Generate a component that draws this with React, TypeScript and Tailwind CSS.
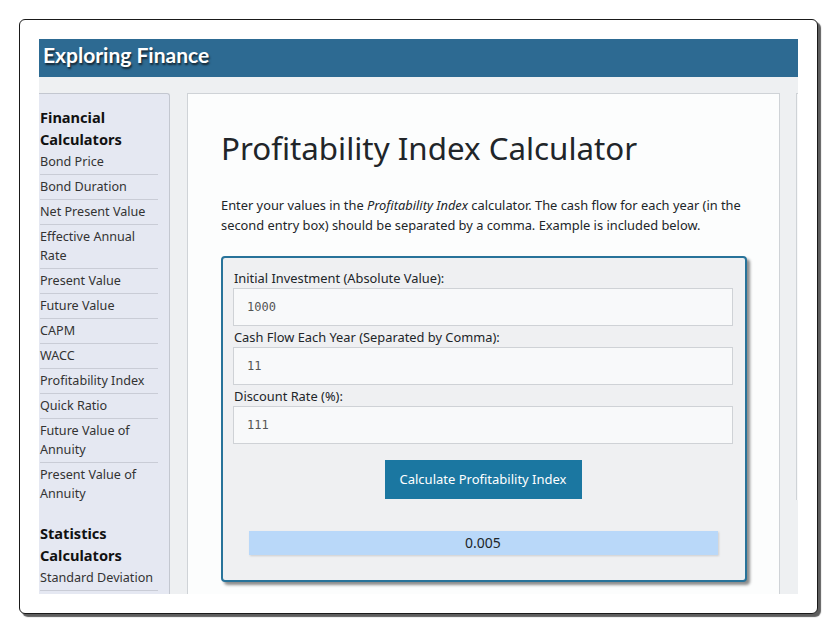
import React from "react";

const financial: string[][] = [
  ["Bond Price"],
  ["Bond Duration"],
  ["Net Present Value"],
  ["Effective Annual", "Rate"],
  ["Present Value"],
  ["Future Value"],
  ["CAPM"],
  ["WACC"],
  ["Profitability Index"],
  ["Quick Ratio"],
  ["Future Value of", "Annuity"],
  ["Present Value of", "Annuity"],
];

const fields = [
  { label: "Initial Investment (Absolute Value):", value: "1000" },
  { label: "Cash Flow Each Year (Separated by Comma):", value: "11" },
  { label: "Discount Rate (%):", value: "111" },
];

const NavItem: React.FC<{ lines: string[]; last?: boolean }> = ({ lines, last }) => (
  <a
    href="#"
    className={
      last
        ? "block w-[118px] pt-[2px] pb-[3px] text-[12.6px] leading-[19px] text-[#333]"
        : "block w-[118px] pt-[2px] pb-[3px] text-[12.6px] leading-[19px] text-[#333] border-b border-[#c9ccd6]"
    }
  >
    {lines.map((l) => (
      <span key={l} className="block">
        {l}
      </span>
    ))}
  </a>
);

const Sidebar = () => (
  <aside className="w-[131px] shrink-0 bg-[#e5e8f2] border-t border-r border-[#c3c7d0] rounded-tr-[3px] pl-[1px] pt-[12px]">
    <h3 className="text-[14.6px] leading-[22px] font-bold text-[#111]">
      Financial
      <br />
      Calculators
    </h3>
    <nav>
      {financial.map((lines, i) => (
        <NavItem key={lines.join(" ")} lines={lines} last={i === financial.length - 1} />
      ))}
    </nav>
    <h3 className="mt-[16px] text-[14.6px] leading-[22px] font-bold text-[#111]">
      Statistics
      <br />
      Calculators
    </h3>
    <nav>
      <NavItem lines={["Standard Deviation"]} />
    </nav>
  </aside>
);

const CalculatorBox = () => (
  <div className="mt-[21px] w-[526px] rounded-[4px] border-2 border-[#28739a] bg-[#eff0f2] pt-[11px] pl-[10px] pr-[12px] pb-[25px] shadow-[3px_3px_3px_rgba(0,0,0,0.45)]">
    {fields.map((f, i) => (
      <div key={f.label}>
        <label className={i === 0 ? "block pl-[1px] text-[12.85px] leading-[19px] text-[#212529]" : "block mt-[2px] pl-[1px] text-[12.85px] leading-[19px] text-[#212529]"}>
          {f.label}
        </label>
        <input
          readOnly
          value={f.value}
          className="block h-[38px] w-[500px] border border-[#cfd2d6] bg-[#f8f9fa] pl-[13px] font-['DejaVu_Sans_Mono',monospace] text-[12px] text-[#555] outline-none"
        />
      </div>
    ))}
    <button className="mx-auto mt-[16px] block h-[39px] w-[197px] bg-[#1b77a1] text-[13px] text-white">
      Calculate Profitability Index
    </button>
    <div className="mx-auto mt-[32px] h-[24px] w-[469px] bg-[#b9d8f9] text-center text-[14px] leading-[24px] text-[#212529] shadow-[1px_1px_2px_rgba(0,0,0,0.15)]">
      0.005
    </div>
  </div>
);

export default function App() {
  return (
    <div className="min-h-screen bg-white p-[19px] font-['Noto_Sans',sans-serif]">
      <div className="h-[595px] w-[799px] rounded-[6px] border border-[#1a1a1a] bg-white p-[19px] shadow-[3px_3px_1px_#5e5e5e]">
        <div className="flex h-[555px] w-[759px] flex-col overflow-hidden bg-[#eef0f2]">
          <header className="flex h-[38px] shrink-0 items-center bg-[#2d6a92] pb-[7px] pl-[4px]">
            <span className="font-['Comic_Sans_MS','Lato',sans-serif] text-[21px] font-bold text-white [text-shadow:1px_2px_2px_#14232e]">
              Exploring Finance
            </span>
          </header>
          <div className="flex min-h-0 flex-1 gap-[17px] pt-[16px]">
            <Sidebar />
            <main className="w-[593px] shrink-0 border-x border-t border-[#cfd3d7] bg-[#fcfdfd] pl-[33px] pt-[34px]">
              <h1 className="text-[31.3px] leading-[40px] text-[#212529]">Profitability Index Calculator</h1>
              <p className="mt-[27px] text-[12.85px] leading-[20px] text-[#212529]">
                Enter your values in the <em>Profitability Index</em> calculator. The cash flow for each year (in the
                <br />
                second entry box) should be separated by a comma. Example is included below.
              </p>
              <CalculatorBox />
            </main>
            <div className="h-[407px] w-[200px] shrink-0 -ml-px border-l border-t border-[#cfd3d7] bg-[#f7f8f9]" />
          </div>
        </div>
      </div>
    </div>
  );
}
